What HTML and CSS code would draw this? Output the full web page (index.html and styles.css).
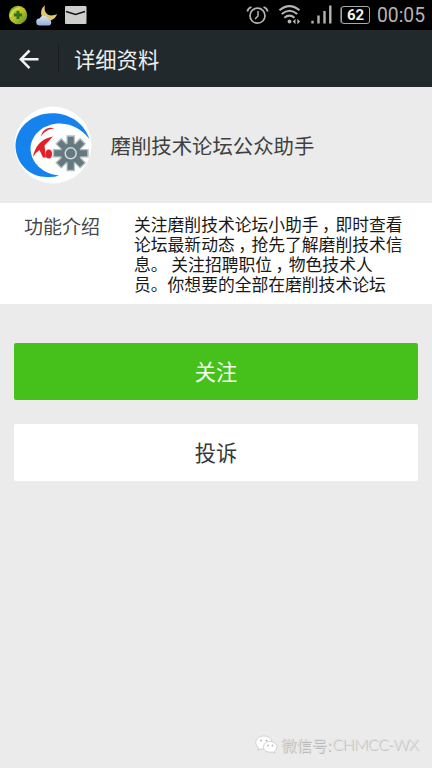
FILE: index.html
```html
<!DOCTYPE html>
<html lang="zh-CN">
<head>
<meta charset="utf-8">
<title>详细资料</title>
<link rel="stylesheet" href="styles.css">
</head>
<body>
<div class="status">
  <svg class="status-left" width="90" height="30" viewBox="0 0 90 30">
    <defs>
      <linearGradient id="ball" x1="0" y1="0" x2="1" y2="1"><stop offset="0" stop-color="#55ad29"/><stop offset=".45" stop-color="#c6c52b"/><stop offset="1" stop-color="#5a8f16"/></linearGradient>
      <linearGradient id="cloud" x1="0" y1="0" x2="0" y2="1"><stop offset="0" stop-color="#dce5f2"/><stop offset="1" stop-color="#91aed5"/></linearGradient>
    </defs>
    <circle cx="18" cy="15" r="9.2" fill="url(#ball)"/>
    <path d="M10.500 17Q12 9 20 8" fill="none" stroke="#e1d64b" stroke-width="2"/>
    <path d="M18 11v8M14 15h8" stroke="#28771c" stroke-width="3"/>
    <path d="M45 5.500C39 9 40 19 47 21C52 21 56 18 57 14C49 18 43 13 45 5.500Z" fill="#dfc773"/>
    <path d="M40 25.500a3.500 3.500 0 0 1-.5-7a4.500 4.500 0 0 1 8.500 1a3 3 0 0 1 .5 6Z" fill="url(#cloud)"/>
    <rect x="65" y="6" width="21.500" height="18" rx="1" fill="#cecece"/>
    <path d="M66 11.500L75.500 14.500L85 11.500" fill="none" stroke="#151515" stroke-width="1.600"/>
  </svg>
  <div class="status-right">
    <svg width="98" height="30" viewBox="245 0 98 30" fill="none" stroke="#b4b4b4">
      <circle cx="257.500" cy="15.700" r="7.500" stroke-width="1.700"/>
      <path d="M258 11v5l-3 3" stroke-width="1.500"/>
      <path d="M247.300 11.500Q248 8 251.500 7M267.700 11.500Q267 8 263.500 7" stroke-width="1.700"/>
      <path d="M279.500 10.300Q289.500 2 299.500 10.300M281.700 14Q289.500 7.500 297.300 14M284.300 17.700Q289.500 13.500 294.500 17.700" stroke-width="2"/>
      <circle cx="289.500" cy="21.500" r="1.900" fill="#b4b4b4" stroke="none"/>
      <path d="M295.500 18.800v5.400l-2.800-2.700ZM297.300 18.800v5.400l2.800-2.700Z" fill="#b4b4b4" stroke="none"/>
      <path d="M312.500 20.800v2.700M318.500 15.500v8M324.500 11v12.500M330.300 5.500v18" stroke-width="2.400"/>
    </svg>
    <div class="battery">62</div>
    <div class="clock">00:05</div>
  </div>
</div>
<header class="bar">
  <svg class="back" width="58" height="57" viewBox="0 0 58 57" fill="none" stroke="#f2f3f3" stroke-width="2.500"><path d="M21 29.300H38.500M29.500 20.500L20.800 29.300L29.500 38.200"/></svg>
  <h1>详细资料</h1>
</header>
<section class="profile">
  <svg width="78" height="78" viewBox="0 0 78 78">
    <circle cx="39" cy="39" r="38.500" fill="#fdfefe"/>
    <path d="M75.500 33C68 12 48 5 30 8C12 12 2 25 1.500 40C2 58 16 71 33 71Q40 71.500 45 69.500C29 68 17 57 16.500 43C17 28 30 17.500 46 17.500C59 18 68 24 75.500 33Z" fill="#1682ee"/>
    <path d="M27 30.500C28 24 34 20 40.500 22.500C34 23 31 25 27 30.500ZM19 51C21 41 26 33 39 30.500Q34 36 30.500 39.500L32 51.500H29L25.500 44Q22 46 19 51Z" fill="#e22028"/>
    <ellipse cx="34.800" cy="48" rx="3.200" ry="4.500" fill="#e22028"/>
    <g transform="translate(56.700 47.300)">
      <g stroke="#b4bec1" stroke-width="8.500"><path d="M0-18V18M-18 0H18M-12.500-12.500L12.500 12.500M12.500-12.500L-12.500 12.500"/></g>
      <g stroke="#647980" stroke-width="6"><path d="M0-16.500V16.500M-16.500 0H16.500M-11.500-11.500L11.500 11.500M11.500-11.500L-11.500 11.500"/></g>
      <circle r="10" fill="#647980"/><circle r="5.500" fill="#647980" stroke="#d5dcdd" stroke-width="1.500"/>
    </g>
  </svg>
  <div class="name">磨削技术论坛公众助手</div>
</section>
<section class="intro">
  <div class="label">功能介绍</div>
  <p>关注磨削技术论坛小助手<span class="comma">，</span>即时查看<br>论坛最新动态<span class="comma">，</span>抢先了解磨削技术信<br>息。 关注招聘职位<span class="comma">，</span>物色技术人<br>员。你想要的全部在磨削技术论坛</p>
</section>
<main class="actions">
  <button class="follow">关注</button>
  <button>投诉</button>
</main>
<footer class="mark">
  <svg width="23" height="20" viewBox="0 0 23 20">
    <g stroke="#c2c2c2" stroke-width=".7">
      <path d="M9 1C4 1 .8 4 .8 7.600C.8 9.700 1.900 11.500 3.700 12.700L3 15.300L6 13.800C14 15.500 17.500 11 17 7C16.500 3.500 13 1 9 1Z" fill="#fff"/>
      <path d="M15 6.500C11 6.500 8.500 9 8.500 12C8.500 15.500 12 18 17.500 17L20 18.300L19.400 16C21 15 22 13.500 22 12C22 9 19 6.500 15 6.500Z" fill="#fff"/>
    </g>
    <g fill="#b8b8b8"><circle cx="6" cy="5.500" r="1"/><circle cx="11.500" cy="5.500" r="1"/><circle cx="13" cy="10.500" r=".9"/><circle cx="17.500" cy="10.500" r=".9"/></g>
  </svg>
  <span class="mark-cn">微信号:</span><span class="mark-id">CHMCC-WX</span>
</footer>
</body>
</html>
```
FILE: styles.css
```css
* { box-sizing: border-box; }
body {
  margin: 0;
  width: 432px;
  height: 768px;
  display: flex;
  flex-direction: column;
  background: #ebebeb;
  font-family: "Noto Sans CJK SC", sans-serif;
  overflow: hidden;
}
svg { display: block; flex: none; }
.status {
  height: 30px;
  display: flex;
  justify-content: space-between;
  background: #000;
}
.status-right { display: flex; align-items: center; padding-right: 7px; }
.battery {
  width: 29px;
  height: 18px;
  margin-left: -2px;
  border: 1.5px solid #a8a8a8;
  border-radius: 3px;
  color: #f0f0f0;
  font: bold 15px/17px Roboto, sans-serif;
  text-align: center;
  box-shadow: -1px 0 0 -0.2px #777;
}
.clock {
  width: 48px;
  margin-left: 7px;
  color: #b4b4b4;
  font: 19.3px/31px Roboto, sans-serif;
  white-space: nowrap;
}
.bar {
  height: 57px;
  display: flex;
  align-items: center;
  background: #22292c;
}
.back { width: 58px; }
.bar h1 {
  margin: 0;
  padding-left: 15px;
  border-left: 1px solid #171c1e;
  color: #eceeee;
  font-size: 21.3px;
  font-weight: 400;
  line-height: 29px;
}
.profile {
  height: 116px;
  display: flex;
  align-items: center;
  padding-left: 14px;
}
.name {
  margin-left: 18.5px;
  color: #404040;
  font-size: 20.4px;
  line-height: 30px;
}
.intro {
  height: 101px;
  display: flex;
  padding: 11px 0 0 24px;
  background: #fff;
}
.label { width: 110px; color: #484848; font-size: 19px; line-height: 24px; }
.intro p {
  margin: 0;
  color: #181818;
  font-size: 16.8px;
  line-height: 20px;
  white-space: nowrap;
}
.comma {
  padding: 0 4.9px 0 3.5px;
  font-feature-settings: "halt";
}
.actions {
  display: flex;
  flex-direction: column;
  gap: 24px;
  padding: 39px 14px 0;
}
.actions button {
  height: 57px;
  padding: 0 0 1px;
  border: 0;
  border-radius: 2px;
  background: #fff;
  color: #383838;
  font: 21.2px/56px "Noto Sans CJK SC", sans-serif;
}
.actions .follow { background: #46c11b; color: #f4fff0; }
.mark {
  display: flex;
  align-items: center;
  height: 24px;
  margin: auto 0 11px 255px;
  color: #dedede;
  text-shadow: 1px 1px 0 #bcbcbc;
  white-space: nowrap;
}
.mark-cn { margin: 0 0 2px 3px; width: 51px; font-size: 15.3px; line-height: 22px; }
.mark-id { margin-bottom: 2px; font: 300 16px/22px Lato, sans-serif; letter-spacing: -0.6px; }
```
